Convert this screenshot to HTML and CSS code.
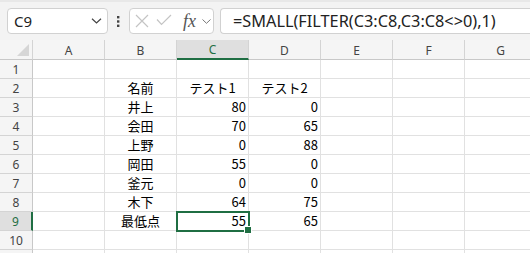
FILE: index.html
```html
<!DOCTYPE html>
<html lang="ja">
<head>
    <meta charset="UTF-8">
    <title>Excel - SMALL FILTER</title>
    <link rel="stylesheet" href="styles.css">
</head>
<body>
    <div class="formula-bar">
        <div class="name-box">
            <span>C9</span>
            <svg width="11" height="6" viewBox="0 0 11 6"><path d="M1 0.8 L5.5 5 L10 0.8" fill="none" stroke="#444" stroke-width="1.2"/></svg>
        </div>
        <div class="grip">
            <svg width="3" height="11" viewBox="0 0 3 11"><rect x="0" y="0" width="2.4" height="2.4" fill="#444"/><rect x="0" y="4.3" width="2.4" height="2.4" fill="#444"/><rect x="0" y="8.6" width="2.4" height="2.4" fill="#444"/></svg>
        </div>
        <div class="fx-box">
            <svg class="icon-x" width="14" height="14" viewBox="0 0 14 14"><path d="M1 1 L13 13 M13 1 L1 13" stroke="#c4c4c4" stroke-width="1.2"/></svg>
            <svg class="icon-check" width="16" height="12" viewBox="0 0 16 12"><path d="M1 5.5 L5.5 10.5 L15 1" fill="none" stroke="#c4c4c4" stroke-width="1.2"/></svg>
            <span class="fx">fx</span>
            <svg class="icon-down" width="9" height="5" viewBox="0 0 9 5"><path d="M0.5 0.5 L4.5 4.3 L8.5 0.5" fill="none" stroke="#777" stroke-width="1"/></svg>
        </div>
        <div class="formula">=SMALL(FILTER(C3:C8,C3:C8&lt;&gt;0),1)</div>
    </div>

    <div class="sheet">
        <div class="corner"><svg width="12" height="12" viewBox="0 0 12 12"><polygon points="12,0 12,12 0,12" fill="#d6d6d6"/></svg></div>
        <div class="col-head">A</div>
        <div class="col-head">B</div>
        <div class="col-head active">C</div>
        <div class="col-head">D</div>
        <div class="col-head">E</div>
        <div class="col-head">F</div>
        <div class="col-head">G</div>

        <div class="row-head">1</div>
        <div class="cell"></div><div class="cell"></div><div class="cell"></div><div class="cell"></div><div class="cell"></div><div class="cell"></div><div class="cell"></div>

        <div class="row-head">2</div>
        <div class="cell"></div><div class="cell center">名前</div><div class="cell center">テスト1</div><div class="cell center">テスト2</div><div class="cell"></div><div class="cell"></div><div class="cell"></div>

        <div class="row-head">3</div>
        <div class="cell"></div><div class="cell center">井上</div><div class="cell num">80</div><div class="cell num">0</div><div class="cell"></div><div class="cell"></div><div class="cell"></div>

        <div class="row-head">4</div>
        <div class="cell"></div><div class="cell center">会田</div><div class="cell num">70</div><div class="cell num">65</div><div class="cell"></div><div class="cell"></div><div class="cell"></div>

        <div class="row-head">5</div>
        <div class="cell"></div><div class="cell center">上野</div><div class="cell num">0</div><div class="cell num">88</div><div class="cell"></div><div class="cell"></div><div class="cell"></div>

        <div class="row-head">6</div>
        <div class="cell"></div><div class="cell center">岡田</div><div class="cell num">55</div><div class="cell num">0</div><div class="cell"></div><div class="cell"></div><div class="cell"></div>

        <div class="row-head">7</div>
        <div class="cell"></div><div class="cell center">釜元</div><div class="cell num">0</div><div class="cell num">0</div><div class="cell"></div><div class="cell"></div><div class="cell"></div>

        <div class="row-head">8</div>
        <div class="cell"></div><div class="cell center">木下</div><div class="cell num">64</div><div class="cell num">75</div><div class="cell"></div><div class="cell"></div><div class="cell"></div>

        <div class="row-head active">9</div>
        <div class="cell"></div><div class="cell center">最低点</div><div class="cell num selected">55</div><div class="cell num">65</div><div class="cell"></div><div class="cell"></div><div class="cell"></div>

        <div class="row-head">10</div>
        <div class="cell"></div><div class="cell"></div><div class="cell"></div><div class="cell"></div><div class="cell"></div><div class="cell"></div><div class="cell"></div>

        <div class="row-head"></div>
        <div class="cell"></div><div class="cell"></div><div class="cell"></div><div class="cell"></div><div class="cell"></div><div class="cell"></div><div class="cell"></div>
    </div>
</body>
</html>
```

FILE: styles.css
```css
:root {
    --toolbar: #f3f3f3;
    --box-border: #d1d1d1;
    --header: #f5f5f5;
    --header-active: #dfdfdf;
    --header-line: #d4d4d4;
    --grid: #e1e1e1;
    --green: #1f6e43;
    --text: #222;
}

* {
    box-sizing: border-box;
}

body {
    margin: 0;
    background: #fff;
    font-family: "Noto Sans", "Liberation Sans", sans-serif;
    overflow: hidden;
}

/* formula bar */
.formula-bar {
    display: flex;
    align-items: center;
    height: 40px;
    padding-left: 7px;
    background: var(--toolbar);
    border-top: 2px solid #e8e8e8;
    overflow: hidden;
}

.name-box {
    width: 101px;
    height: 26px;
    border: 1px solid var(--box-border);
    border-radius: 4px;
    background: #fff;
    display: flex;
    align-items: center;
    justify-content: space-between;
    padding: 0 5px 0 6px;
    font-size: 15px;
    color: var(--text);
}

.grip {
    width: 21px;
    display: flex;
    justify-content: center;
}

.fx-box {
    width: 85px;
    height: 26px;
    border: 1px solid var(--box-border);
    border-radius: 4px;
    background: #fff;
    display: flex;
    align-items: center;
    padding-left: 5px;
}

.icon-check {
    margin-left: 7px;
    margin-top: -3px;
}

.fx {
    margin-left: 11px;
    font-family: "Liberation Serif", serif;
    font-style: italic;
    font-size: 18px;
    color: #555;
    line-height: 1;
}

.icon-down {
    margin-left: 6px;
}

.formula {
    flex: 1;
    height: 26px;
    margin-left: 6px;
    border: 1px solid var(--box-border);
    border-right: none;
    border-radius: 4px 0 0 4px;
    background: #fff;
    padding-left: 12px;
    font-size: 16.3px;
    line-height: 24px;
    color: var(--text);
    white-space: nowrap;
}

/* sheet grid */
.sheet {
    display: grid;
    grid-template-columns: 33px repeat(7, 72px);
    grid-template-rows: 20px repeat(11, 19px);
    width: 530px;
    height: 213px;
    overflow: hidden;
}

.corner,
.col-head,
.row-head {
    background: var(--header);
    color: #444;
    font-size: 12px;
}

.corner {
    display: flex;
    align-items: flex-end;
    justify-content: flex-end;
    padding: 0 3px 3px 0;
    border-right: 1px solid var(--header-line);
    border-bottom: 1px solid #c8c8c8;
}

.col-head {
    display: flex;
    align-items: center;
    justify-content: center;
    border-right: 1px solid var(--header-line);
    border-bottom: 1px solid #c8c8c8;
    padding-top: 1px;
}

.col-head.active {
    background: var(--header-active);
    color: var(--green);
    border-bottom: 2px solid var(--green);
}

.row-head {
    display: flex;
    align-items: center;
    justify-content: center;
    border-right: 1px solid #c8c8c8;
    border-bottom: 1px solid var(--header-line);
}

.row-head.active {
    background: var(--header-active);
    color: var(--green);
    border-right: 2px solid var(--green);
}

.cell {
    border-right: 1px solid var(--grid);
    border-bottom: 1px solid var(--grid);
    font-family: "Noto Sans CJK JP", sans-serif;
    font-size: 13px;
    line-height: 18px;
    color: #000;
    padding: 0 2px;
    white-space: nowrap;
}

.cell.center {
    text-align: center;
}

.cell.num {
    text-align: right;
}

.cell.selected {
    position: relative;
    outline: 2px solid var(--green);
    outline-offset: -1px;
    z-index: 1;
}

.cell.selected::after {
    content: "";
    position: absolute;
    right: -4px;
    bottom: -4px;
    width: 6px;
    height: 6px;
    background: var(--green);
    border: 1px solid #fff;
}
```
